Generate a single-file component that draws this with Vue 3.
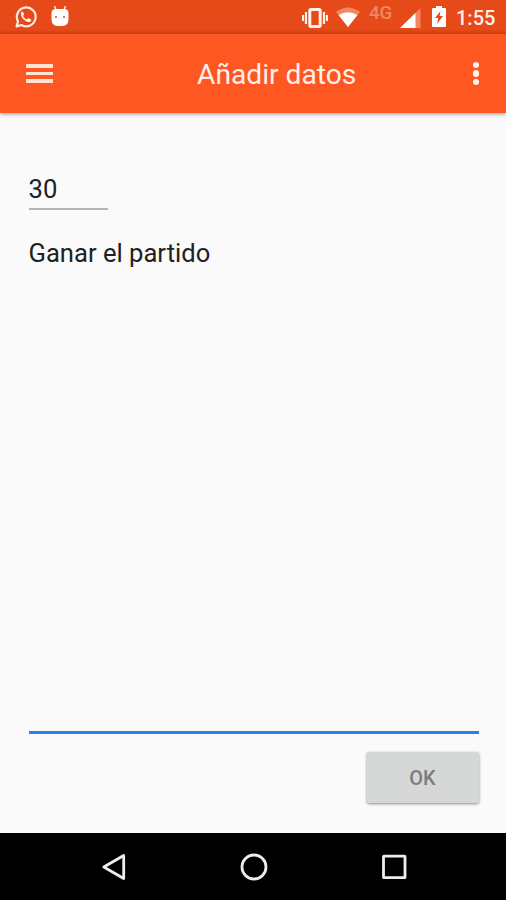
<script setup>
import { ref } from 'vue'

const quantity = ref('30')
const description = ref('Ganar el partido')
</script>

<template>
  <div class="screen">
    <div class="status">
      <svg class="whatsapp" width="24" height="24" viewBox="0 0 24 24" fill="none">
        <path d="M2.6 21.4 4 16.4A9.4 9.4 0 1 1 7.5 20Z" stroke="#ffe9e1" stroke-width="2.2" stroke-linejoin="round" />
        <path d="M8.4 6.8c-1.1.3-1.7 1.4-1.4 2.9.7 3.5 4 6.5 7.3 7.3 1.7.3 3-.7 3-2.3l-3-1.6-1.4 1.5c-1.8-.8-3-2-3.8-3.6l1.1-1.4-1.2-2.8z" fill="#fff3ee" />
      </svg>
      <svg class="robot" width="18" height="22" viewBox="0 0 18 22">
        <path d="M3.5 1 5 5M14.5 1 13 5" stroke="#ffe0d5" stroke-width="1.6" />
        <path d="M0.5 8Q0.5 4 5 4H13Q17.5 4 17.5 8V14Q17.500 21 11.500 21H6.500Q0.500 21 0.500 14Z" fill="#fff" />
        <circle cx="5" cy="12" r="1" fill="#e64a19" />
        <circle cx="13" cy="12" r="1" fill="#e64a19" />
      </svg>
      <svg class="vibrate" width="26" height="20" viewBox="0 0 26 20" fill="none" stroke="#fff0ea">
        <rect x="7.800" y="1.500" width="10.400" height="17" rx="1.200" stroke-width="3" />
        <path d="M4 4v12M22 4v12M1 7v6M25 7v6" stroke-width="2.200" />
      </svg>
      <svg class="wifi" width="24" height="20" viewBox="0 0 24 20">
        <path d="M0 5Q12-4 24 5L12 20Z" fill="#f18763" />
        <path d="M2.500 8Q12 2.500 21.500 8L12 20Z" fill="#fff" />
      </svg>
      <span class="network">4G</span>
      <svg class="signal" width="21" height="20" viewBox="0 0 21 20">
        <path d="M0 20 20.500 0V20Z" fill="#f18763" />
        <path d="M0 20 15.500 5V20Z" fill="#fff" />
      </svg>
      <svg class="battery" width="14" height="21" viewBox="0 0 14 21">
        <path d="M4 0h6v2h3q1 0 1 1v17q0 1-1 1H1q-1 0-1-1V3q0-1 1-1h3z" fill="#fff" />
        <path d="M8.500 5 3 12h3.300L5 18l6-8H7.600z" fill="#e64a19" />
      </svg>
      <span class="time">1:55</span>
    </div>

    <header class="bar">
      <button class="menu" aria-label="Menú"><i></i><i></i><i></i></button>
      <h1>Añadir datos</h1>
      <button class="more" aria-label="Más opciones"><i></i><i></i><i></i></button>
    </header>

    <main>
      <input v-model="quantity" class="quantity" aria-label="Cantidad" />
      <textarea v-model="description" class="description" aria-label="Descripción" spellcheck="false"></textarea>
      <button class="ok">OK</button>
    </main>

    <nav>
      <svg width="28" height="30" viewBox="0 0 28 30">
        <path d="M3.800 15 23.700 3.500V26.500Z" />
      </svg>
      <svg width="28" height="30" viewBox="0 0 28 30">
        <circle cx="14" cy="15" r="12" />
      </svg>
      <svg width="28" height="30" viewBox="0 0 28 30">
        <rect x="3.500" y="4.200" width="21.500" height="21.500" rx=".5" />
      </svg>
    </nav>
  </div>
</template>

<style>
body {
  margin: 0;
}
</style>

<style scoped>
.screen {
  display: flex;
  flex-direction: column;
  width: 506px;
  height: 900px;
  overflow: hidden;
  background: #fafafa;
  color: #212121;
  font-family: Roboto, sans-serif;
}
button,
input,
textarea {
  box-sizing: border-box;
  border: 0;
  border-radius: 0;
  margin: 0;
  padding: 0;
  outline: 0;
  background: none;
  color: inherit;
  font-family: inherit;
}
.status {
  display: flex;
  align-items: flex-start;
  box-sizing: border-box;
  flex: 0 0 34px;
  padding-left: 14px;
  background: linear-gradient(#e64a19 29px, #d84315);
}
.status svg {
  flex: none;
}
.whatsapp {
  margin-top: 5px;
}
.robot {
  margin: 5px 0 0 13px;
}
.vibrate {
  margin: 8px 0 0 233px;
}
.wifi {
  margin: 7px 0 0 8px;
}
.network {
  width: 30px;
  box-sizing: border-box;
  margin-top: 3px;
  padding-left: 9px;
  font-size: 18.700px;
  line-height: 20px;
  font-weight: 500;
  color: #f18763;
}
.signal {
  margin: 8px 0 0 10px;
}
.battery {
  margin: 6px 0 0 11px;
}
.time {
  margin: 6px 0 0 10px;
  font-size: 20px;
  line-height: 24px;
  font-weight: 500;
  color: #fff0ea;
}
.bar {
  position: relative;
  display: flex;
  align-items: center;
  flex: 0 0 79px;
  background: #ff5722;
  box-shadow: 0 1px 4px rgba(0, 0, 0, 0.4);
}
.menu {
  display: flex;
  flex-direction: column;
  gap: 4px;
  width: 27px;
  margin-left: 26px;
}
.menu i {
  height: 3.600px;
  background: #ffe1d6;
}
h1 {
  flex: 1;
  margin: 0 0 0 144px;
  padding-top: 2px;
  font-size: 28.200px;
  line-height: 34px;
  font-weight: 400;
  white-space: nowrap;
  color: #fff0ea;
}
.more {
  display: flex;
  flex-direction: column;
  gap: 2.500px;
  margin-right: 27px;
}
.more i {
  width: 6.200px;
  height: 6.200px;
  border-radius: 50%;
  background: #fff4f0;
}
main {
  display: flex;
  flex: 1;
  flex-direction: column;
  align-items: flex-start;
  padding: 58px 27.500px 30px 28.500px;
}
.quantity {
  width: 79px;
  height: 39px;
  padding-bottom: 1px;
  border-bottom: 2px solid #b5b5b5;
  font-size: 25.600px;
}
.description {
  flex: 1;
  align-self: stretch;
  margin-top: 22px;
  padding-top: 5px;
  border-bottom: 3px solid #2b7fee;
  font-size: 25.600px;
  line-height: 32px;
  resize: none;
}
.ok {
  align-self: flex-end;
  width: 112px;
  height: 51px;
  margin-top: 18px;
  border-radius: 2px;
  background: #d6d7d7;
  box-shadow: 0 1px 3px rgba(0, 0, 0, 0.45);
  font-size: 20px;
  font-weight: 500;
  color: #7c7c7c;
}
nav {
  display: flex;
  align-items: center;
  justify-content: center;
  gap: 112px;
  flex: 0 0 67px;
  padding-left: 2px;
  background: #000;
}
nav svg {
  fill: none;
  stroke: #eee;
  stroke-width: 2.800px;
  stroke-linejoin: round;
}
</style>
